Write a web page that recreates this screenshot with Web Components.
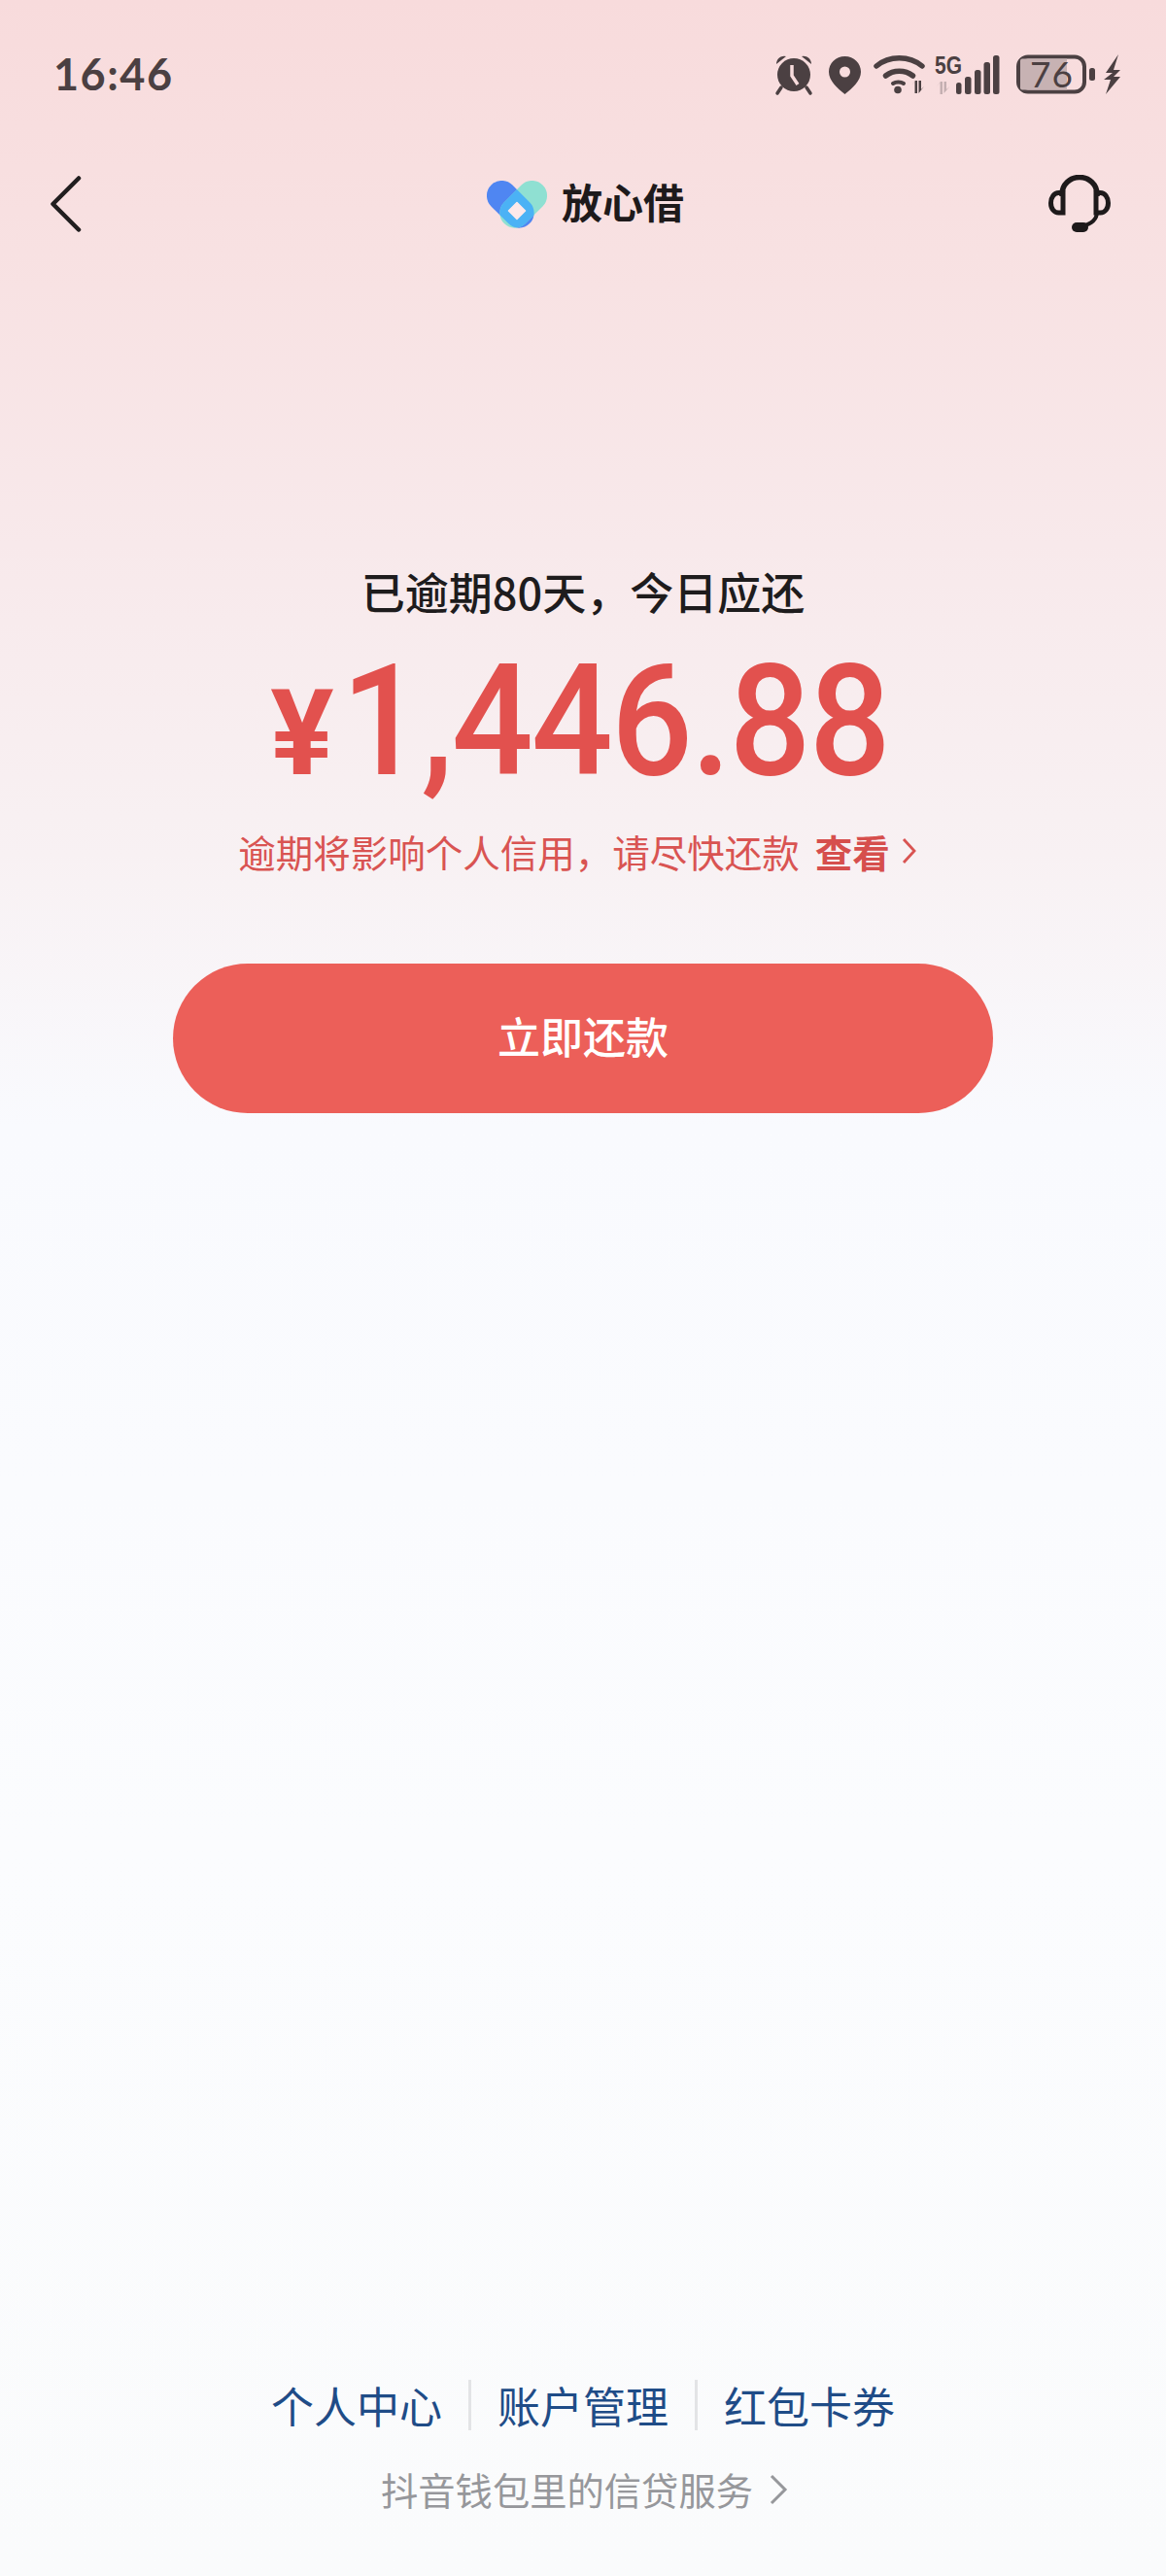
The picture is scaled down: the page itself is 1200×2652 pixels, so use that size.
<!DOCTYPE html>
<html lang="zh">
<head>
<meta charset="utf-8">
<title>放心借</title>
<style>
  html, body { margin: 0; padding: 0; }
  body {
    font-family: "Noto Sans CJK SC", "Noto Sans", sans-serif;
  }
</style>
</head>
<body>

<template id="status-bar-template">
  <style>
    :host {
      display: flex;
      justify-content: space-between;
      align-items: flex-start;
      padding: 53px 46px 0 55px;
      height: 47px;
    }
    #time {
      font: 700 45px/46px Lato, "Open Sans", sans-serif;
      color: #4b4042;
      letter-spacing: 1.5px;
    }
    svg { display: block; margin-top: -7px; }
  </style>
  <div id="time">16:46</div>
  <svg width="357" height="62" viewBox="797 46 357 62" fill="#4b4042">
    <!-- alarm -->
    <circle cx="817" cy="77" r="17"/>
    <path d="M799 66a8 8 0 0 1 10-8zM835 66a8 8 0 0 0-10-8z"/>
    <path d="M804 90l-4 6M830 90l4 6" stroke="#4b4042" stroke-width="3.5" stroke-linecap="round"/>
    <path d="M815 67v11l6 9" fill="none" stroke="#f8dcdd" stroke-width="3.5"/>
    <!-- location pin -->
    <path fill-rule="evenodd" d="M869.5 58c9.4 0 16.5 7 16.5 16 0 9-8.500 16.500-16.500 23C861.500 90.500 853 83 853 74c0-9 7.100-16 16.500-16zm0 10.500a5.500 5.500 0 1 0 0 11 5.500 5.500 0 0 0 0-11z"/>
    <!-- wifi -->
    <path d="M902 68c13-11 34-11 47 0M911.500 78c8-6.500 20-6.500 28 0" fill="none" stroke="#4b4042" stroke-width="5.500" stroke-linecap="round"/>
    <path d="M919 86c3-2 8-2 11 0" fill="none" stroke="#4b4042" stroke-width="4" stroke-linecap="round"/>
    <circle cx="924" cy="92.500" r="3.800"/>
    <path d="M938 88l3.500-4.500V96h2.500V83h-2zM945.500 83h2.500v9l3-3-5.500 7z"/>
    <!-- 5G with mobile data arrows -->
    <text x="962" y="76" font-family="'Liberation Sans', sans-serif" font-size="25" font-weight="700" textLength="28" lengthAdjust="spacingAndGlyphs">5G</text>
    <path d="M963 90l4.500-5V97h2.500V84h-2zM971.500 84h2.500v8l3.500-3-6 7z" fill="#c4afb1"/>
    <!-- signal bars -->
    <rect x="984" y="85" width="5.500" height="12" rx="2.500"/>
    <rect x="993" y="79" width="6.500" height="18" rx="2.500"/>
    <rect x="1003" y="72" width="6.500" height="25" rx="2.500"/>
    <rect x="1012.500" y="64" width="6.500" height="33" rx="2.500"/>
    <rect x="1022" y="57" width="6.500" height="40" rx="2.500"/>
    <!-- battery -->
    <rect x="1048" y="58.500" width="68" height="36" rx="10" fill="none" stroke="#4b4042" stroke-width="4"/>
    <path d="M1052 60.500h46v32h-46a2 2 0 0 1-2-2v-28a2 2 0 0 1 2-2z" fill="#c7b2b3"/>
    <text x="1060" y="90" font-family="Lato, sans-serif" font-size="37" letter-spacing="1">76</text>
    <rect x="1121" y="70" width="6" height="13" rx="2.500"/>
    <!-- charging bolt -->
    <path d="M1151 56 1138 75h7l-9 7h7l-5 15 15-18h-7l7-7h-7z"/>
  </svg>
</template>

<template id="nav-bar-template">
  <style>
    :host {
      display: grid;
      grid-template-columns: 1fr auto 1fr;
      align-items: center;
      height: 64px;
      margin-top: 78px;
      padding: 0 57px 0 52px;
    }
    #title {
      display: flex;
      align-items: center;
      gap: 15px;
      margin-left: 10px;
      font: 700 42px/64px "Noto Sans CJK SC", sans-serif;
      color: #1e1a1b;
    }
    #title span { display: block; margin-top: -6px; }
    #help { justify-self: end; }
    svg { display: block; }
  </style>
  <svg width="32" height="60" viewBox="52 180 32 60">
    <path d="M81 183.500 54.500 210 81 236.500" fill="none" stroke="#211e1f" stroke-width="4.500" stroke-linecap="round" stroke-linejoin="round"/>
  </svg>
  <div id="title">
    <svg width="62" height="49" viewBox="0 0 62 49">
      <defs>
        <clipPath id="lobe"><rect x="-3.700" y="8.800" width="56" height="31" rx="15.500" transform="rotate(45 24.300 24.300)"/></clipPath>
      </defs>
      <rect x="-3.700" y="8.800" width="56" height="31" rx="15.500" transform="rotate(45 24.300 24.300)" fill="#4f86f2"/>
      <rect x="9.700" y="8.800" width="56" height="31" rx="15.500" transform="rotate(-45 37.700 24.300)" fill="#8fe0d2"/>
      <g clip-path="url(#lobe)">
        <rect x="9.700" y="8.800" width="56" height="31" rx="15.500" transform="rotate(-45 37.700 24.300)" fill="#4bb2f5"/>
      </g>
      <path d="M31 22.500l8.500 8.500-8.500 8.500-8.500-8.500z" fill="#fde9ea" stroke="#fde9ea" stroke-width="1.500" stroke-linejoin="round"/>
    </svg>
    <span><slot></slot></span>
  </div>
  <svg id="help" width="64" height="60" viewBox="0 0 64 60">
    <path d="M14 22v-2C14 10 22 2.500 32 2.500S50 10 50 20v2" fill="none" stroke="#1e1a1b" stroke-width="5.500"/>
    <path d="M15 18.500v20.500h-4.500C6 39 2.500 35 2.500 29S6 18.500 10.500 18.500zM49 18.500v20.500h4.500c4.500 0 8-4 8-10s-3.500-10.500-8-10.500z" fill="none" stroke="#1e1a1b" stroke-width="5"/>
    <path d="M50 38c0 9-7 13-16 15" fill="none" stroke="#1e1a1b" stroke-width="4"/>
    <rect x="24" y="49" width="17" height="10" rx="5" fill="#1e1a1b"/>
  </svg>
</template>

<template id="repay-summary-template">
  <style>
    :host {
      display: flex;
      flex-direction: column;
      align-items: center;
      margin-top: 337px;
    }
    #due {
      font-size: 45px;
      font-weight: 500;
      line-height: 60px;
      color: #1e1c1d;
    }
    #amount {
      display: flex;
      align-items: baseline;
      justify-content: center;
      margin-top: 38px;
      padding-right: 39px;
      height: 132px;
      line-height: 132px;
      color: #e2514e;
      font-family: Roboto, "Liberation Sans", sans-serif;
      font-weight: 500;
      white-space: nowrap;
    }
    #sign {
      font-size: 122px;
      font-weight: 700;
      margin-right: -12px;
    }
    #value {
      font-size: 159px;
      letter-spacing: -2px;
      width: 551px;
      transform: scaleX(.93);
      transform-origin: left baseline;
    }
    #note {
      display: flex;
      align-items: center;
      margin-top: 42px;
      padding-right: 12px;
      font-size: 38.500px;
      line-height: 50px;
      color: #d95452;
      white-space: nowrap;
    }
    #more { font-weight: 700; margin-left: 16px; color: #d64f4d; }
    svg { display: block; margin-left: 11px; }
  </style>
  <div id="due"><slot name="due"></slot></div>
  <div id="amount"><span id="sign">¥</span><span id="value"><slot name="amount"></slot></span></div>
  <div id="note">
    <slot name="note"></slot>
    <span id="more"><slot name="more"></slot></span>
    <svg width="16" height="28" viewBox="0 0 16 28">
      <path d="M3 2l11 12L3 26" fill="none" stroke="#d95452" stroke-width="2.800"/>
    </svg>
  </div>
</template>

<template id="repay-button-template">
  <style>
    :host {
      display: flex;
      align-items: center;
      justify-content: center;
      box-sizing: border-box;
      height: 154px;
      margin: 91px 178px 0;
      padding-bottom: 6px;
      border-radius: 77px;
      background: #ec5f59;
      color: #fff;
      font-size: 44px;
      font-weight: 500;
    }
  </style>
  <slot></slot>
</template>

<template id="footer-links-template">
  <style>
    :host {
      display: flex;
      flex-direction: column;
      align-items: center;
      margin-top: auto;
      padding-bottom: 64px;
    }
    #links {
      display: flex;
      align-items: center;
      color: #1f4c87;
      font-size: 44px;
      line-height: 52px;
    }
    ::slotted([slot="link"]) {
      display: block;
      padding: 0 27px;
      border-left: 3px solid #e3e4e6;
    }
    ::slotted([slot="link"]:first-child) { border-left: 0; }
    #service {
      display: flex;
      align-items: center;
      margin-top: 36px;
      padding-left: 3px;
      font-size: 38.300px;
      line-height: 50px;
      color: #96979b;
    }
    svg { display: block; margin-left: 16px; }
  </style>
  <div id="links"><slot name="link"></slot></div>
  <div id="service">
    <slot name="service"></slot>
    <svg width="20" height="32" viewBox="0 0 20 32">
      <path d="M3 2l14 14L3 30" fill="none" stroke="#96979b" stroke-width="3"/>
    </svg>
  </div>
</template>

<template id="repay-page-template">
  <style>
    :host {
      display: flex;
      flex-direction: column;
      box-sizing: border-box;
      width: 1200px;
      height: 2652px;
      background: linear-gradient(180deg,
        #f8dbdc 0,
        #f8e1e2 260px,
        #f8e9eb 560px,
        #f8f1f3 880px,
        #f9fafe 1160px,
        #fbfcfe 1900px,
        #fafbfc 2652px);
      font-family: "Noto Sans CJK SC", "Noto Sans", sans-serif;
    }
  </style>
  <slot></slot>
</template>

<repay-page>
  <status-bar></status-bar>
  <nav-bar>放心借</nav-bar>
  <repay-summary>
    <span slot="due">已逾期80天，今日应还</span>
    <span slot="amount">1,446.88</span>
    <span slot="note">逾期将影响个人信用，请尽快还款</span>
    <span slot="more">查看</span>
  </repay-summary>
  <repay-button>立即还款</repay-button>
  <footer-links>
    <span slot="link">个人中心</span>
    <span slot="link">账户管理</span>
    <span slot="link">红包卡券</span>
    <span slot="service">抖音钱包里的信贷服务</span>
  </footer-links>
</repay-page>

<script>
// every element just clones its template into an open shadow root
function defineFromTemplate(tagName, templateId) {
    class TemplatedElement extends HTMLElement {
        constructor () {
            super();
            this.attachShadow({mode: 'open'});
            const template = document.getElementById(templateId);
            this.shadowRoot.appendChild(template.content.cloneNode(true));
        }
    }
    customElements.define(tagName, TemplatedElement);
}

defineFromTemplate('status-bar', 'status-bar-template');
defineFromTemplate('nav-bar', 'nav-bar-template');
defineFromTemplate('repay-summary', 'repay-summary-template');
defineFromTemplate('repay-button', 'repay-button-template');
defineFromTemplate('footer-links', 'footer-links-template');
defineFromTemplate('repay-page', 'repay-page-template');
</script>
</body>
</html>
